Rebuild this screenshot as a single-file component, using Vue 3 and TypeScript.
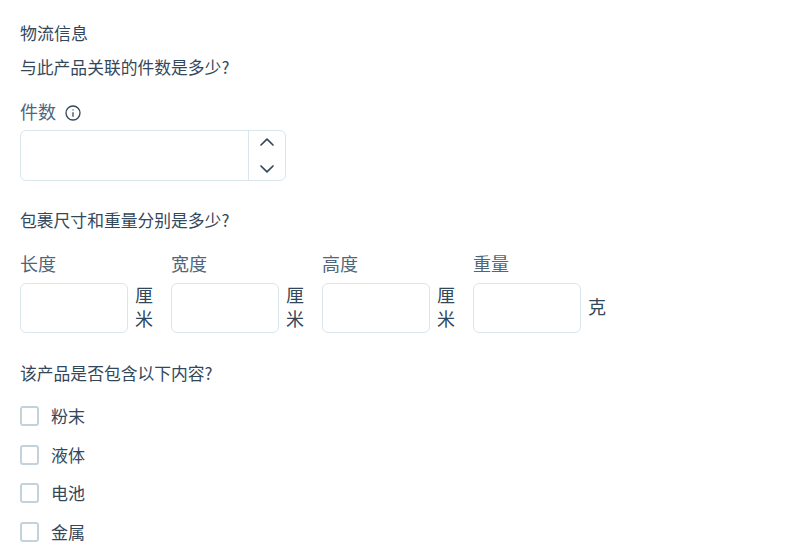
<script setup lang="ts">
const dims: { label: string; unit: string; wrap: boolean }[] = [
  { label: '长度', unit: '厘米', wrap: true },
  { label: '宽度', unit: '厘米', wrap: true },
  { label: '高度', unit: '厘米', wrap: true },
  { label: '重量', unit: '克', wrap: false },
]
const contents: string[] = ['粉末', '液体', '电池', '金属']
</script>

<template>
  <main class="page">
    <h2 class="title">物流信息</h2>
    <p class="question first">与此产品关联的件数是多少?</p>

    <div class="label-row">
      <span class="label">件数</span>
      <svg class="info" width="16" height="16" viewBox="0 0 16 16" fill="none" stroke="#33475b" stroke-width="1.3">
        <circle cx="8" cy="8" r="7" />
        <path d="M8 7.2V11.8" />
        <circle cx="8" cy="4.9" r="0.7" fill="#33475b" stroke="none" />
      </svg>
    </div>
    <div class="stepper">
      <input class="stepper-input" type="text" />
      <div class="stepper-buttons">
        <svg width="16" height="10" viewBox="0 0 16 10" fill="none" stroke="#33475b" stroke-width="1.7" stroke-linecap="round" stroke-linejoin="round">
          <path d="M2 8L8 2.2L14 8" />
        </svg>
        <svg width="16" height="10" viewBox="0 0 16 10" fill="none" stroke="#33475b" stroke-width="1.7" stroke-linecap="round" stroke-linejoin="round">
          <path d="M2 2L8 7.8L14 2" />
        </svg>
      </div>
    </div>

    <p class="question second">包裹尺寸和重量分别是多少?</p>

    <div class="dims">
      <div v-for="d in dims" :key="d.label" class="dim">
        <span class="dim-label">{{ d.label }}</span>
        <div class="dim-row">
          <input class="dim-input" type="text" />
          <span class="unit" :class="{ wrap: d.wrap }">{{ d.unit }}</span>
        </div>
      </div>
    </div>

    <p class="question third">该产品是否包含以下内容?</p>

    <ul class="checks">
      <li v-for="c in contents" :key="c" class="check">
        <span class="box"></span>
        <span class="check-text">{{ c }}</span>
      </li>
    </ul>
  </main>
</template>

<style>
html, body { background: #fff; overflow: hidden; }
</style>

<style scoped>
.page {
  box-sizing: border-box;
  width: 786px;
  height: 555px;
  padding: 21px 20px 0;
  overflow: hidden;
  font-family: "Noto Sans CJK SC", "Noto Sans", sans-serif;
  color: #33475b;
}
.title {
  margin: 0;
  font-size: 17px;
  font-weight: 400;
  line-height: 24px;
}
.question {
  margin: 0;
  font-size: 16.8px;
  line-height: 24px;
}
.first { margin-top: 10px; }
.label-row {
  display: flex;
  align-items: center;
  gap: 9px;
  margin-top: 20px;
  height: 26px;
}
.label { font-size: 18px; line-height: 24px; color: #4f6578; margin-bottom: 2px; }
.info { margin-top: 2px; }
.stepper {
  display: flex;
  box-sizing: border-box;
  width: 266px;
  height: 51px;
  margin-top: 5px;
  border: 1px solid #dbe5ec;
  border-radius: 6px;
}
.stepper-input {
  flex: 1;
  min-width: 0;
  border: 0;
  outline: 0;
  background: transparent;
}
.stepper-buttons {
  width: 37px;
  border-left: 1px solid #dbe5ec;
  display: flex;
  flex-direction: column;
  align-items: center;
  justify-content: space-between;
  padding: 6px 0 6px;
  box-sizing: border-box;
}
.second { margin-top: 27px; }
.dims {
  display: flex;
  gap: 18px;
  margin-top: 19px;
}
.dim { display: flex; flex-direction: column; }
.dim-label {
  font-size: 18px;
  line-height: 24px;
  color: #4f6578;
}
.dim-row {
  display: flex;
  align-items: center;
  gap: 7px;
  margin-top: 8px;
}
.dim-input {
  box-sizing: border-box;
  width: 108px;
  height: 50px;
  border: 1px solid #dbe5ec;
  border-radius: 6px;
  outline: 0;
  background: #fff;
}
.unit {
  font-size: 18px;
  line-height: 24px;
  white-space: nowrap;
  margin-top: -4px;
}
.unit.wrap { width: 18px; white-space: normal; }
.third { margin-top: 28px; }
.checks {
  list-style: none;
  margin: 12px 0 0;
  padding: 0;
}
.check {
  display: flex;
  align-items: center;
  gap: 12px;
  height: 38.5px;
}
.box {
  box-sizing: border-box;
  width: 19px;
  height: 20px;
  border: 2px solid #c4d2dc;
  border-radius: 3px;
  background: #fff;
}
.check-text { font-size: 17px; line-height: 24px; }
</style>
